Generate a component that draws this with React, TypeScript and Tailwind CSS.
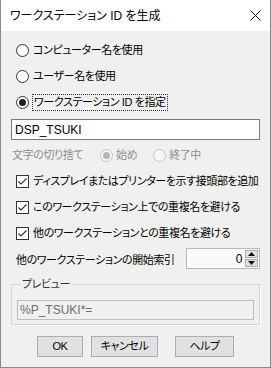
import React from 'react';

const font = "font-['Liberation_Sans','Noto_Sans_CJK_JP',sans-serif] [font-feature-settings:'palt'] whitespace-nowrap";

const Radio: React.FC<{ checked?: boolean; disabled?: boolean }> = ({ checked, disabled }) => (
  <span
    className={`w-[13px] h-[13px] rounded-full border flex items-center justify-center shrink-0 ${
      disabled ? 'border-[#c4c4c4] bg-[#f7f7f7]' : 'border-[#333333] bg-white'
    }`}
  >
    {checked && <span className={`w-[7px] h-[7px] rounded-full ${disabled ? 'bg-[#b5b5b5]' : 'bg-[#222222]'}`} />}
  </span>
);

const Check: React.FC = () => (
  <span className="w-[13px] h-[13px] border border-[#333333] bg-white flex items-center justify-center shrink-0">
    <svg width="11" height="11" viewBox="0 0 11 11">
      <polyline points="1.5,5.5 4,8 9.5,2.5" fill="none" stroke="#333333" strokeWidth="1.2" />
    </svg>
  </span>
);

const Btn: React.FC<{ label: string; w: string }> = ({ label, w }) => (
  <div className={`${w} h-[21px] border border-[#adadad] bg-[#e1e1e1] flex items-center justify-center text-[11px] text-black`}>
    {label}
  </div>
);

const App: React.FC = () => {
  return (
    <div className={`w-[271px] h-[368px] bg-[#f0f0f0] border-x border-b border-[#8a8a8a] flex flex-col text-[11px] text-black ${font}`}>
      {/* Title bar */}
      <div className="h-[31px] bg-white flex items-center justify-between pl-[9px] pr-[9px]">
        <span className="text-[12px] text-black">ワークステーション ID を生成</span>
        <svg width="11" height="11" viewBox="0 0 11 11">
          <path d="M0.5 0.5 L10.5 10.5 M10.5 0.5 L0.5 10.5" stroke="#111" strokeWidth="1" />
        </svg>
      </div>

      <div className="flex flex-col pl-[10px] pr-[10px] pt-[6px] tracking-[-0.4px]">
        <div className="h-[26px] flex items-center gap-[4px] pl-[5px]">
          <Radio />
          <span>コンピューター名を使用</span>
        </div>
        <div className="h-[26px] flex items-center gap-[4px] pl-[5px]">
          <Radio />
          <span>ユーザー名を使用</span>
        </div>
        <div className="h-[26px] flex items-center gap-[3px] pl-[5px]">
          <Radio checked />
          <span className="border border-dotted border-[#333] px-[1px] leading-[15px]">ワークステーション ID を指定</span>
        </div>

        <div className="mt-[4px] h-[21px] border border-[#7a7a7a] bg-white flex items-center pl-[3px] text-[12px] tracking-normal">DSP_TSUKI</div>

        <div className="mt-[2px] h-[26px] flex items-center pl-[1px] text-[#8d8d8d]">
          <span className="w-[88px]">文字の切り捨て</span>
          <span className="flex items-center gap-[3px]">
            <Radio checked disabled />
            <span>始め</span>
          </span>
          <span className="flex items-center gap-[3px] ml-[16px]">
            <Radio disabled />
            <span>終了中</span>
          </span>
        </div>

        <div className="h-[26px] flex items-center gap-[4px] pl-[5px]">
          <Check />
          <span>ディスプレイまたはプリンターを示す接頭部を追加</span>
        </div>
        <div className="h-[26px] flex items-center gap-[4px] pl-[5px]">
          <Check />
          <span>このワークステーション上での重複名を避ける</span>
        </div>
        <div className="h-[26px] flex items-center gap-[4px] pl-[5px]">
          <Check />
          <span>他のワークステーションとの重複名を避ける</span>
        </div>

        <div className="mt-[2px] h-[21px] flex items-center justify-between pl-[5px]">
          <span className="pt-[3px]">他のワークステーションの開始索引</span>
          <div className="w-[74px] h-[21px] border border-[#b9b9b9] bg-[#fafafa] flex">
            <span className="flex-1 flex items-center justify-end pr-[3px] text-[12px]">0</span>
            <div className="w-[14px] flex flex-col gap-[1px] py-[1px] pr-[1px]">
              <div className="flex-1 border border-[#adadad] bg-[#e1e1e1] flex items-center justify-center">
                <svg width="7" height="4" viewBox="0 0 7 4"><polygon points="3.5,0 7,4 0,4" fill="#111" /></svg>
              </div>
              <div className="flex-1 border border-[#adadad] bg-[#e1e1e1] flex items-center justify-center">
                <svg width="7" height="4" viewBox="0 0 7 4"><polygon points="0,0 7,0 3.5,4" fill="#111" /></svg>
              </div>
            </div>
          </div>
        </div>

        {/* Preview group */}
        <div className="mt-[15px] relative border border-[#d5d5d5] shadow-[1px_1px_0_#ffffff] h-[41px] px-[5px] pt-[15px]">
          <span className="absolute left-[8px] -top-[9px] bg-[#f0f0f0] px-[2px] text-[#333333]">プレビュー</span>
          <div className="h-[20px] border border-[#bdbdbd] bg-[#f0f0f0] flex items-center pl-[2px] text-[#6d6d6d] text-[12px] tracking-normal">%P_TSUKI*=</div>
        </div>

        <div className="mt-[11px] flex items-center pl-[26px]">
          <Btn label="OK" w="w-[46px]" />
          <div className="ml-[8px]"><Btn label="キャンセル" w="w-[67px]" /></div>
          <div className="ml-[17px]"><Btn label="ヘルプ" w="w-[59px]" /></div>
        </div>
      </div>
    </div>
  );
};

export default App;
